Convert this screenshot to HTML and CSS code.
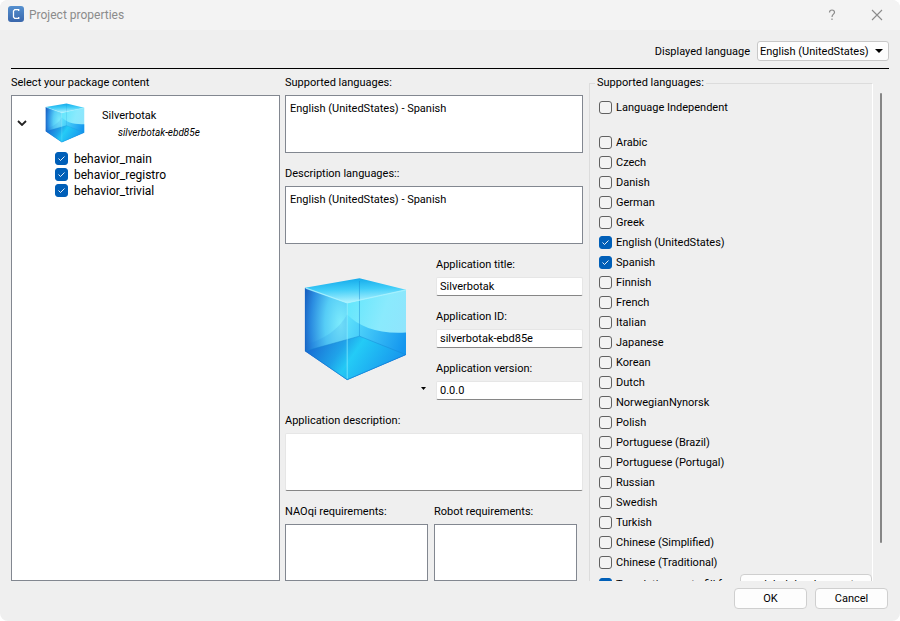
FILE: index.html
```html
<!DOCTYPE html>
<html lang="en">
<head>
<meta charset="utf-8">
<title>Project properties</title>
<link rel="stylesheet" href="styles.css">
</head>
<body>
<svg class="defs" aria-hidden="true">
  <defs>
    <linearGradient id="gTop" x1="0.3" y1="0" x2="0.45" y2="1"><stop offset="0" stop-color="#12a8ea"/><stop offset="0.45" stop-color="#3fcdf8"/><stop offset="1" stop-color="#b4f4ff"/></linearGradient>
    <radialGradient id="gLeft" cx="0.85" cy="0.4" r="0.95"><stop offset="0" stop-color="#7eecfd"/><stop offset="0.4" stop-color="#56cdf6"/><stop offset="0.75" stop-color="#2a8be0"/><stop offset="1" stop-color="#1756b8"/></radialGradient>
    <linearGradient id="gRight" x1="0" y1="0" x2="1" y2="0.5"><stop offset="0" stop-color="#5fe6fc"/><stop offset="0.6" stop-color="#8aeafd"/><stop offset="1" stop-color="#8fe4fc"/></linearGradient>
    <linearGradient id="gWave" x1="0" y1="0" x2="1" y2="0.4"><stop offset="0" stop-color="#5fe2fc"/><stop offset="0.5" stop-color="#38bdf6"/><stop offset="1" stop-color="#1496ee"/></linearGradient>
    <linearGradient id="gFloor" x1="0" y1="0.2" x2="1" y2="0.5"><stop offset="0" stop-color="#1763cf"/><stop offset="0.35" stop-color="#1a9fe8"/><stop offset="0.5" stop-color="#20cbf6"/><stop offset="1" stop-color="#1893ec"/></linearGradient>
    <symbol id="cube" viewBox="70 80 316 316">
      <path fill="url(#gLeft)" d="M76 112 203 158V390L76 303Z"/>
      <path fill="url(#gRight)" d="M203 158 380 118V314L203 390Z"/>
      <path fill="url(#gWave)" d="M203 193C240 232 300 252 380 247V314L203 390Z"/>
      <path fill="#1d7fdd" opacity=".15" d="M203 193C180 235 135 268 76 285V303L203 390Z"/>
      <path fill="url(#gFloor)" opacity=".9" d="M76 303 240 258 380 314 203 390Z"/>
      <path fill="url(#gTop)" d="M240 84 380 118 203 158 76 112Z"/>
      <path fill="none" stroke="#1587d2" stroke-width="3" opacity=".45" d="M240 92V258M76 303 240 258 380 314"/>
      <path fill="none" stroke="#a9f3ff" stroke-width="4" opacity=".8" d="M76 113 203 158 380 119"/>
      <path fill="none" stroke="#8deeff" stroke-width="3" opacity=".7" d="M203 158V386"/>
      <path fill="none" stroke="#1268cb" stroke-width="3" opacity=".6" d="M77 113V303L203 389 379 314"/>
    </symbol>
  </defs>
</svg>
<div class="dialog">
  <header class="titlebar">
    <svg class="logo" viewBox="0 0 16 16" aria-hidden="true"><defs><linearGradient id="gLogo" x1="0" y1="0" x2="0" y2="1"><stop offset="0" stop-color="#5590cf"/><stop offset="1" stop-color="#3a67ac"/></linearGradient></defs><rect width="16" height="16" rx="3" fill="url(#gLogo)"/><path d="M10.700 5V3.700H6.700L5.500 4.900V11.100L6.700 12.300H10.700V11" fill="none" stroke="#fff" stroke-width="1.300"/></svg>
    <h1>Project properties</h1>
    <button class="winbtn" type="button" aria-label="Help"><svg width="8" height="12" viewBox="0 0 8 12"><path d="M1.500 3.500Q1.500 1 4 1T6.500 3.300C6.500 5.200 4 5.200 4 8M4 9.500V11" fill="none" stroke="#8b8b8b" stroke-width="1.200"/></svg></button>
    <button class="winbtn" type="button" aria-label="Close"><svg width="12" height="12" viewBox="0 0 12 12"><path d="M1 1 11 11M11 1 1 11" stroke="#8b8b8b" stroke-width="1.100"/></svg></button>
  </header>
  <div class="langbar">
    <label for="lang">Displayed language</label>
    <select id="lang"><option>English (UnitedStates)</option></select>
  </div>
  <main class="columns">
    <section class="package">
      <h2>Select your package content</h2>
      <div class="tree box">
        <div class="root">
          <svg class="chevron" viewBox="0 0 10 6" aria-hidden="true"><path d="M1 1 5 5 9 1" fill="none" stroke="#222" stroke-width="1.800"/></svg>
          <svg class="cube-small" aria-hidden="true"><use href="#cube"/></svg>
          <div class="names"><span>Silverbotak</span><em>silverbotak-ebd85e</em></div>
        </div>
        <label class="check leaf"><input type="checkbox" checked>behavior_main</label>
        <label class="check leaf"><input type="checkbox" checked>behavior_registro</label>
        <label class="check leaf"><input type="checkbox" checked>behavior_trivial</label>
      </div>
    </section>
    <section class="details">
      <div class="field"><h2>Supported languages:</h2><div class="box text">English (UnitedStates) - Spanish</div></div>
      <div class="field"><h2>Description languages::</h2><div class="box text">English (UnitedStates) - Spanish</div></div>
      <div class="app">
        <button class="iconbtn" type="button" aria-label="Application icon">
          <svg class="cube-large" aria-hidden="true"><use href="#cube"/></svg>
          <svg class="drop" viewBox="0 0 5 3" aria-hidden="true"><path d="M0 0H5L2.500 3Z"/></svg>
        </button>
        <div class="appfields">
          <div class="field"><label for="title">Application title:</label><input id="title" type="text" value="Silverbotak"></div>
          <div class="field"><label for="appid">Application ID:</label><input id="appid" type="text" value="silverbotak-ebd85e"></div>
          <div class="field"><label for="version">Application version:</label><input id="version" type="text" value="0.0.0"></div>
        </div>
      </div>
      <div class="field"><label for="desc">Application description:</label><textarea id="desc"></textarea></div>
      <div class="reqs">
        <div class="field"><h2>NAOqi requirements:</h2><div class="box"></div></div>
        <div class="field"><h2>Robot requirements:</h2><div class="box"></div></div>
      </div>
    </section>
    <section class="languages">
      <div class="scroller">
        <fieldset>
          <legend>Supported languages:</legend>
          <label class="check first"><input type="checkbox">Language Independent</label>
          <label class="check"><input type="checkbox">Arabic</label>
          <label class="check"><input type="checkbox">Czech</label>
          <label class="check"><input type="checkbox">Danish</label>
          <label class="check"><input type="checkbox">German</label>
          <label class="check"><input type="checkbox">Greek</label>
          <label class="check"><input type="checkbox" checked>English (UnitedStates)</label>
          <label class="check"><input type="checkbox" checked>Spanish</label>
          <label class="check"><input type="checkbox">Finnish</label>
          <label class="check"><input type="checkbox">French</label>
          <label class="check"><input type="checkbox">Italian</label>
          <label class="check"><input type="checkbox">Japanese</label>
          <label class="check"><input type="checkbox">Korean</label>
          <label class="check"><input type="checkbox">Dutch</label>
          <label class="check"><input type="checkbox">NorwegianNynorsk</label>
          <label class="check"><input type="checkbox">Polish</label>
          <label class="check"><input type="checkbox">Portuguese (Brazil)</label>
          <label class="check"><input type="checkbox">Portuguese (Portugal)</label>
          <label class="check"><input type="checkbox">Russian</label>
          <label class="check"><input type="checkbox">Swedish</label>
          <label class="check"><input type="checkbox">Turkish</label>
          <label class="check"><input type="checkbox">Chinese (Simplified)</label>
          <label class="check"><input type="checkbox">Chinese (Traditional)</label>
          <div class="autofill"><label class="check"><input type="checkbox" checked>Translations auto-fill from</label><button class="btn" type="button">global development</button></div>
        </fieldset>
      </div>
      <div class="track"><div class="thumb"></div></div>
    </section>
  </main>
  <footer class="actions">
    <button class="btn" type="button">OK</button>
    <button class="btn" type="button">Cancel</button>
  </footer>
</div>
</body>
</html>
```
FILE: styles.css
```css
* { box-sizing: border-box; }
body {
  margin: 0;
  background: #fff;
  color: #000;
  font: 11px/16px Roboto, "Noto Sans", sans-serif;
}
button, input, select, textarea { font: inherit; color: inherit; margin: 0; }
h1, h2 { margin: 0; font: inherit; }
.defs { position: absolute; width: 0; height: 0; }
.dialog {
  display: flex;
  flex-direction: column;
  height: 100vh;
  min-height: 400px;
  background: #efefef;
  border-radius: 8px;
  overflow: hidden;
}
.titlebar {
  display: flex;
  align-items: center;
  height: 30px;
  flex: none;
  padding: 0 1px 0 8px;
  background: #f3f3f3;
}
.logo { width: 16px; height: 16px; margin: 0 5px 2px 0; }
.titlebar h1 { flex: 1; font-size: 12px; color: #8b8b8b; }
.winbtn { display: grid; place-items: center; width: 45px; height: 28px; padding: 0; border: 0; background: none; }
.langbar {
  display: flex;
  justify-content: flex-end;
  align-items: center;
  gap: 7px;
  height: 39px;
  flex: none;
  margin: 0 11px;
  padding-top: 4px;
  border-bottom: 1px solid #000;
}
.langbar label { padding-top: 2px; }
.langbar select {
  appearance: none;
  width: 132px;
  height: 20px;
  padding: 2px 16px 0 2px;
  border: 1px solid #c8c8c8;
  border-radius: 3px;
  background: #fdfdfd url("data:image/svg+xml,%3Csvg xmlns='http://www.w3.org/2000/svg' width='8' height='4'%3E%3Cpath d='M0 0H8L4 4Z'/%3E%3C/svg%3E") no-repeat right 5px center;
}
.columns {
  flex: 1;
  min-height: 0;
  display: grid;
  grid-template-columns: minmax(0, 269fr) minmax(0, 299fr) minmax(0, 300fr);
  grid-template-rows: minmax(0, 1fr);
  column-gap: 5px;
  padding: 6px 11px 0;
}
.box { background: #fff; border: 1px solid #828790; }
.package { display: flex; flex-direction: column; gap: 4px; }
.tree { flex: 1; padding: 7px 8px; }
.root { display: flex; align-items: center; height: 40px; margin-left: -3px; }
.chevron { width: 10px; height: 6px; }
.cube-small { width: 40px; height: 40px; margin: 0 17px 0 18px; }
.names { display: flex; flex-direction: column; gap: 1px; padding-top: 2px; }
.names em { margin-left: 16px; font-size: 10px; }
.check { display: flex; align-items: flex-start; gap: 4px; height: 20px; line-height: 22px; }
.check input {
  appearance: none;
  flex: none;
  width: 13px;
  height: 13px;
  margin-top: 4px;
  border: 1px solid #616161;
  border-radius: 3px;
  background: #f3f3f3;
}
.check input:checked {
  border-color: #005fb8;
  background: #005fb8 url("data:image/svg+xml,%3Csvg xmlns='http://www.w3.org/2000/svg' width='7' height='5'%3E%3Cpath d='M.5 2.500 2.500 4.500 6.500 .5' fill='none' stroke='%23fff' stroke-width='.9'/%3E%3C/svg%3E") no-repeat center;
}
.leaf { height: 16px; gap: 6px; margin-left: 35px; font-size: 12px; line-height: 18px; }
.leaf input { margin-top: 2px; }
.root + .leaf { margin-top: 7px; }
.details { display: flex; flex-direction: column; gap: 13px; padding-right: 1px; }
.field { display: flex; flex-direction: column; gap: 4px; }
.field .box { height: 58px; }
.text { padding: 5px 4px; }
.field input, .field textarea {
  width: 100%;
  padding: 1px 3px;
  border: 1px solid #e6e6e6;
  border-bottom-color: #868686;
  border-radius: 2px;
  background: #fff;
}
.field input { height: 19px; }
.field textarea { height: 58px; resize: none; display: block; }
.app { display: grid; grid-template-columns: 151fr 147fr; }
.iconbtn { display: flex; align-items: flex-end; padding: 20px 8px 8px 18px; border: 0; background: none; }
.cube-large { width: 105px; height: 105px; margin-bottom: 10px; }
.drop { width: 5px; height: 3px; margin: 0 2px 2px auto; }
.appfields { display: flex; flex-direction: column; gap: 13px; }
.reqs { flex: 1; display: grid; grid-template-columns: 1fr 1fr; gap: 6px; padding-right: 6px; }
.reqs .box { flex: 1; height: auto; }
.languages { display: flex; }
.scroller { flex: 1; min-width: 0; overflow: hidden; }
fieldset {
  min-width: 0;
  margin: 0;
  padding: 6px 0 0 9px;
  border: 1px solid #dcdcdc;
  border-right: 1px solid #fff;
  border-bottom: 0;
}
legend { margin-left: -4px; padding: 0 2px; }
.first { margin-bottom: 15px; }
.autofill { display: flex; align-items: flex-start; padding-top: 2px; }
.autofill .check { flex: 1; min-width: 0; white-space: nowrap; }
.autofill .btn { width: 132px; flex: none; }
.track { width: 16px; padding: 18px 7px 38px; }
.thumb { height: 100%; background: #868686; border-radius: 1px; }
.actions { display: flex; justify-content: flex-end; gap: 8px; padding: 7px 12px 12px; }
.btn { height: 21px; padding: 0; border: 1px solid #cfcfcf; border-radius: 4px; background: #fdfdfd; }
.actions .btn { width: 73px; }
```
